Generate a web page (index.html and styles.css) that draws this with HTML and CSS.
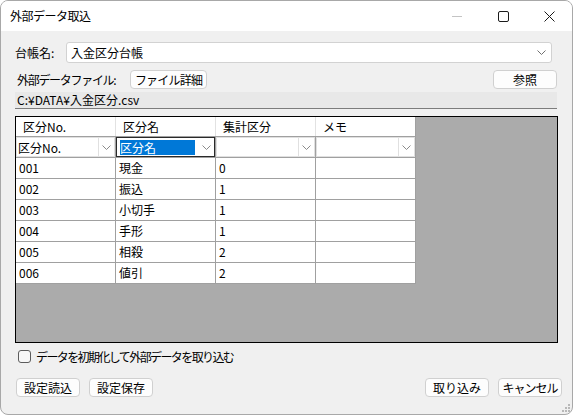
FILE: index.html
```html
<!DOCTYPE html>
<html lang="ja">
<head>
<meta charset="utf-8">
<title>外部データ取込</title>
<link rel="stylesheet" href="styles.css">
</head>
<body>
<div class="window">
  <div class="titlebar">
    <span class="title">外部データ取込</span>
    <div class="controls">
      <span class="ctl"><svg width="10" height="10" viewBox="0 0 10 10"><path d="M0 5.5H10" stroke="#c4c4c4" stroke-width="1"/></svg></span>
      <span class="ctl"><svg width="11" height="11" viewBox="0 0 11 11"><rect x="0.5" y="0.5" width="10" height="10" rx="1.5" fill="none" stroke="#1a1a1a" stroke-width="1"/></svg></span>
      <span class="ctl"><svg width="11" height="11" viewBox="0 0 11 11"><path d="M0.5 0.5L10.5 10.5M10.5 0.5L0.5 10.5" stroke="#1a1a1a" stroke-width="1"/></svg></span>
    </div>
  </div>
  <div class="content">
    <div class="r1">
      <span class="lbl lbl-ledger">台帳名:</span>
      <div class="combo">
        <span>入金区分台帳</span>
        <svg class="chev" width="9" height="5" viewBox="0 0 9 5"><path d="M0.5 0.5L4.5 4.5L8.5 0.5" fill="none" stroke="#707070" stroke-width="1"/></svg>
      </div>
    </div>
    <div class="r2">
      <span class="lbl lbl-file">外部データファイル:</span>
      <button class="btn btn-detail">ファイル詳細</button>
      <button class="btn btn-browse">参照</button>
    </div>
    <div class="path">C:¥DATA¥入金区分.csv</div>
    <div class="grid">
      <div class="grow head">
        <div class="hcell">区分No.</div>
        <div class="hcell">区分名</div>
        <div class="hcell">集計区分</div>
        <div class="hcell">メモ</div>
      </div>
      <div class="grow filter">
        <div class="fcell"><div class="fcombo"><span class="ftext">区分No.</span><span class="fbtn"><svg width="9" height="5" viewBox="0 0 9 5"><path d="M0.5 0.5L4.5 4.5L8.5 0.5" fill="none" stroke="#8a8a8a" stroke-width="1"/></svg></span></div></div>
        <div class="fcell"><div class="fcombo focus"><span class="ftext"><span class="sel">区分名</span></span><span class="fbtn"><svg width="9" height="5" viewBox="0 0 9 5"><path d="M0.5 0.5L4.5 4.5L8.5 0.5" fill="none" stroke="#8a8a8a" stroke-width="1"/></svg></span></div></div>
        <div class="fcell"><div class="fcombo"><span class="ftext"></span><span class="fbtn"><svg width="9" height="5" viewBox="0 0 9 5"><path d="M0.5 0.5L4.5 4.5L8.5 0.5" fill="none" stroke="#8a8a8a" stroke-width="1"/></svg></span></div></div>
        <div class="fcell"><div class="fcombo"><span class="ftext"></span><span class="fbtn"><svg width="9" height="5" viewBox="0 0 9 5"><path d="M0.5 0.5L4.5 4.5L8.5 0.5" fill="none" stroke="#8a8a8a" stroke-width="1"/></svg></span></div></div>
      </div>
      <div class="grow data"><div class="cell">001</div><div class="cell">現金</div><div class="cell">0</div><div class="cell"></div></div>
      <div class="grow data"><div class="cell">002</div><div class="cell">振込</div><div class="cell">1</div><div class="cell"></div></div>
      <div class="grow data"><div class="cell">003</div><div class="cell">小切手</div><div class="cell">1</div><div class="cell"></div></div>
      <div class="grow data"><div class="cell">004</div><div class="cell">手形</div><div class="cell">1</div><div class="cell"></div></div>
      <div class="grow data"><div class="cell">005</div><div class="cell">相殺</div><div class="cell">2</div><div class="cell"></div></div>
      <div class="grow data"><div class="cell">006</div><div class="cell">値引</div><div class="cell">2</div><div class="cell"></div></div>
    </div>
    <label class="check"><span class="box"></span><span class="check-text">データを初期化して外部データを取り込む</span></label>
    <div class="actions">
      <button class="btn btn-act">設定読込</button>
      <button class="btn btn-act">設定保存</button>
      <span class="spacer"></span>
      <button class="btn btn-act">取り込み</button>
      <button class="btn btn-act kana">キャンセル</button>
    </div>
  </div>
  <svg class="grip" width="8" height="8" viewBox="0 0 8 8">
    <rect x="6" y="0" width="2" height="2" fill="#b8b8b8"/>
    <rect x="3" y="3" width="2" height="2" fill="#b8b8b8"/>
    <rect x="6" y="3" width="2" height="2" fill="#b8b8b8"/>
    <rect x="0" y="6" width="2" height="2" fill="#b8b8b8"/>
    <rect x="3" y="6" width="2" height="2" fill="#b8b8b8"/>
    <rect x="6" y="6" width="2" height="2" fill="#b8b8b8"/>
  </svg>
</div>
</body>
</html>
```

FILE: styles.css
```css
* { box-sizing: border-box; }
html, body { margin: 0; padding: 0; background: #ffffff; }
body {
  font-family: "Noto Sans CJK JP", "Noto Sans", sans-serif;
  font-size: 12px;
  color: #000;
}
.window {
  position: relative;
  width: 573px;
  height: 415px;
  border: 1px solid #a8a8a8;
  border-radius: 8px;
  background: #f0f0f0;
  overflow: hidden;
  display: flex;
  flex-direction: column;
}
.titlebar {
  flex: none;
  height: 30px;
  background: #ffffff;
  display: flex;
  align-items: center;
}
.title { padding-left: 9px; line-height: 16px; margin-top: -1px; letter-spacing: -0.5px; }
.controls { margin-left: auto; display: flex; height: 100%; }
.ctl { width: 46px; display: flex; align-items: center; justify-content: center; }
.ctl svg { display: block; }

.content {
  flex: 1;
  display: flex;
  flex-direction: column;
  padding: 11px 0 0 14px;
}
.lbl { line-height: 16px; white-space: nowrap; }
.r1 { display: flex; align-items: center; height: 21px; }
.lbl-ledger { width: 51px; }
.combo {
  width: 486px;
  height: 21px;
  background: #ffffff;
  border: 1px solid #d2d2d2;
  border-radius: 3px;
  display: flex;
  align-items: center;
  padding-left: 4px;
  line-height: 16px;
}
.chev { margin-left: auto; margin-right: 5px; display: block; }

.r2 { display: flex; align-items: center; height: 19px; margin-top: 7px; }
.lbl-file { width: 115px; padding-left: 2px; letter-spacing: -1.3px; }
.btn {
  font: inherit;
  color: #000;
  background: #fdfdfd;
  border: 1px solid #d0d0d0;
  border-radius: 4px;
  padding: 0;
  height: 19px;
  line-height: 16px;
  white-space: nowrap;
}
.btn-detail { width: 77px; letter-spacing: -0.8px; }
.btn-browse { width: 64px; margin-left: auto; margin-right: 15px; }

.path {
  margin-top: 3px;
  width: 542px;
  height: 17px;
  background: #e8e8e8;
  border-bottom: 1px solid #7c7c7c;
  padding-left: 2px;
  line-height: 16px;
}

.grid {
  margin-top: 7px;
  width: 543px;
  height: 227px;
  border: 1px solid #000;
  background: #ababab;
}
.grow { display: flex; width: 400px; }
.head { height: 20px; background: #fff; border-bottom: 1px solid #a0a0a0; }
.hcell {
  width: 100px;
  border-right: 1px solid #e2e2e2;
  padding-left: 7px;
  line-height: 19px;
}
.hcell:last-child { border-right-color: #a0a0a0; }
.filter { height: 21px; }
.fcell {
  width: 100px;
  background: #fff;
  border-right: 1px solid #a0a0a0;
  border-bottom: 1px solid #a0a0a0;
}
.fcombo {
  height: 20px;
  display: flex;
  border: 1px solid #e0e0e0;
}
.fcombo.focus { border: 1px solid #2a2a2a; }
.ftext { flex: 1; padding-left: 1px; line-height: 17px; display: flex; align-items: center; }
.sel {
  display: block;
  width: 75px;
  height: 15px;
  line-height: 15px;
  background: #0078d7;
  color: #fff;
  margin-left: 2px;
}
.fbtn {
  width: 16px;
  border-left: 1px solid #e0e0e0;
  display: flex;
  align-items: center;
  justify-content: center;
}
.fcombo.focus .fbtn { border-left-color: transparent; }
.fbtn svg { display: block; }
.data { height: 21px; }
.cell {
  width: 100px;
  background: #fff;
  border-right: 1px solid #a0a0a0;
  border-bottom: 1px solid #a0a0a0;
  padding-left: 3px;
  line-height: 20px;
}

.check {
  display: flex;
  align-items: center;
  margin-top: 7px;
  height: 13px;
  padding-left: 3px;
  line-height: 16px;
}
.check-text { letter-spacing: -1.6px; }
.box {
  width: 13px;
  height: 13px;
  border: 1px solid #5c5c5c;
  border-radius: 3px;
  background: #f7f7f7;
  margin-right: 5px;
}

.actions {
  display: flex;
  margin-top: 15px;
  height: 19px;
  padding-left: 1px;
  padding-right: 10px;
}
.btn-act { width: 64px; margin-right: 9px; }
.btn-act:last-child { margin-right: 0; }
.kana { letter-spacing: -1px; }
.spacer { flex: 1; }

.grip { position: absolute; right: 2px; bottom: 2px; display: block; }
```
